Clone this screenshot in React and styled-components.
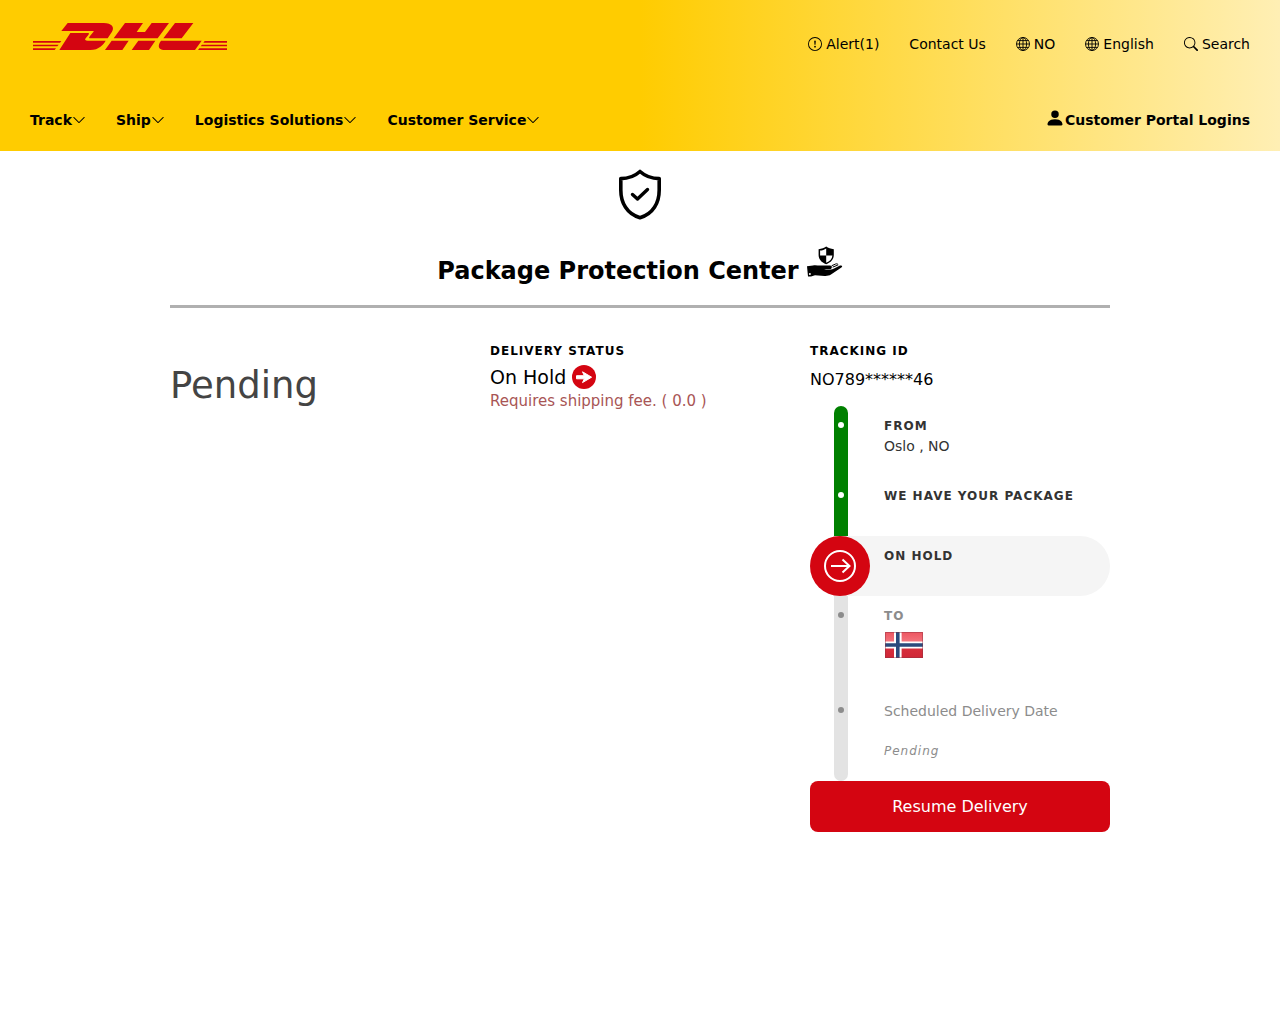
import React from "react";
import styled, { createGlobalStyle } from "styled-components";
import {
  BsChevronDown,
  BsExclamationCircle,
  BsPersonFill,
  BsSearch,
} from "react-icons/bs";

const GlobalStyle = createGlobalStyle`
  *, *::before, *::after { box-sizing: border-box; }
  body {
    margin: 0;
    background: #fff;
    color: #000;
    font-family: "DejaVu Sans", Verdana, sans-serif;
    font-size: 14px;
    line-height: 20px;
  }
  svg { display: block; flex: none; }
`;

const Header = styled.header`
  display: flex;
  flex-direction: column;
  gap: 51px;
  padding: 20px 30px 19px;
  background: linear-gradient(90deg, #ffcc00 50%, #ffefb4 100%);
`;

const Bar = styled.div`
  display: flex;
  align-items: center;
  justify-content: space-between;
`;

const TopBar = styled(Bar)`
  padding-bottom: 3px;
`;

const Links = styled.nav`
  display: flex;
  align-items: center;
  gap: 30px;
`;

const UtilityLinks = styled(Links)`
  padding-top: 14px;
`;

const LogoLink = styled.a`
  align-self: flex-start;
  padding: 3px;
`;

const NavLink = styled.a`
  display: inline-flex;
  align-items: center;
  gap: ${(p) => p.$gap || 0}px;
  color: #000;
  font-weight: ${(p) => (p.$bold ? 700 : 400)};
  text-decoration: none;
`;

const NavButton = styled.button`
  display: inline-flex;
  align-items: center;
  gap: ${(p) => p.$gap || 0}px;
  padding: 0;
  border: 0;
  background: none;
  color: #000;
  font: inherit;
  font-weight: ${(p) => (p.$bold ? 700 : 400)};
  cursor: pointer;
`;

const PersonIcon = styled(BsPersonFill)`
  margin-bottom: 4px;
`;

const Page = styled.main`
  max-width: 980px;
  margin: 0 auto;
  padding: 18px 20px 40px;
`;

const Hero = styled.section`
  display: flex;
  flex-direction: column;
  align-items: center;
  gap: 26px;
  padding-bottom: 14px;
  border-bottom: 3px solid #b0b0b0;
`;

const Title = styled.h1`
  display: flex;
  align-items: flex-start;
  gap: 8px;
  margin: 0;
  font-size: 24px;
  line-height: 40px;
`;

const TitleText = styled.span`
  padding-top: 5px;
`;

const Columns = styled.section`
  display: grid;
  grid-template-columns: repeat(3, 1fr);
  gap: 20px;
  padding-top: 33px;
`;

const State = styled.h2`
  margin: 0;
  padding-top: 20px;
  color: #444;
  font-size: 37px;
  font-weight: 400;
  line-height: 50px;
`;

const Label = styled.h3`
  margin: 0;
  font-size: 12px;
  line-height: 20px;
  letter-spacing: 1px;
  text-transform: uppercase;
`;

const Status = styled.p`
  display: flex;
  align-items: center;
  gap: 6px;
  margin: 0;
  padding-top: 4px;
  font-size: 19px;
  line-height: 24px;
`;

const Fee = styled.p`
  margin: 0;
  color: #a85555;
  font-size: 15px;
  line-height: 24px;
`;

const TrackingId = styled.p`
  margin: 0;
  padding: 6px 0 14px;
  font-size: 16px;
  line-height: 25px;
`;

const Steps = styled.ol`
  margin: 0;
  padding: 0;
  list-style: none;
`;

const Step = styled.li`
  display: grid;
  grid-template-columns: 60px 1fr;
  column-gap: 14px;
  min-height: ${(p) => p.$height}px;
  border-radius: 30px;
  background: ${(p) => (p.$current ? "#f5f5f5" : "none")};
  color: ${(p) => (p.$upcoming ? "#8c8c8c" : "#333")};
`;

const Rail = styled.span`
  display: flex;
  justify-content: center;
  width: 14px;
  margin-left: 24px;
  padding-top: 16px;
  border-radius: ${(p) => (p.$first ? "7px 7px 0 0" : p.$last ? "0 0 7px 7px" : "0")};
  background: ${(p) => (p.$done ? "#008000" : "#e3e3e3")};

  &::before {
    content: "";
    width: 6px;
    height: 6px;
    border-radius: 50%;
    background: ${(p) => (p.$done ? "#fff" : "#8c8c8c")};
  }
`;

const CurrentMark = styled.span`
  display: flex;
  align-items: center;
  justify-content: center;
  width: 60px;
  height: 60px;
  border-radius: 50%;
  background: #d40511;
  color: #fff;
`;

const StepBody = styled.div`
  padding-top: 10px;
`;

const StepText = styled.p`
  margin: 0;
`;

const FlagBox = styled.div`
  padding-top: 6px;
`;

const Expected = styled.em`
  display: block;
  padding-top: 20px;
  font-size: 12px;
  letter-spacing: 1px;
`;

const Resume = styled.button`
  display: block;
  width: 100%;
  padding: 15px;
  border: 0;
  border-radius: 8px;
  background: #d40511;
  color: #fff;
  font: inherit;
  font-size: 16px;
  line-height: 21px;
  cursor: pointer;
`;

const Logo = () => (
  <svg width="194" height="27" viewBox="0 0 582 81" fill="#d40511" role="img" aria-label="DHL">
    <path d="M104 0H212C237 0 246 13 236 28L224 46H174C166 46 168 43 171 39L181 27C184 23 181 24 176 24H85Z" />
    <path d="M112 30H163C169 30 169 32 166 36L158 46C154 51 157 53 164 53H218C212 64 198 81 172 81H79Z" />
    <path d="M276 0H330L311 27H336L356 0H408L374 46H242Z" />
    <path d="M236 53H287L268 81H216ZM316 53H367L348 81H296Z" />
    <path d="M426 0H481L446 46H391ZM384 53H506L486 81H397C378 81 371 71 384 53Z" />
    <path d="M0 54H85L81 59H0ZM0 65H77L73 70H0ZM0 76H69L65 81H0Z" />
    <path d="M515 54H582V59H511ZM507 65H582V70H503ZM499 76H582V81H495Z" />
  </svg>
);

const Globe = () => (
  <svg width="14" height="14" viewBox="0 0 14 14" fill="none" stroke="currentColor" strokeWidth=".9" aria-hidden="true">
    <circle cx="7" cy="7" r="6.5" />
    <ellipse cx="7" cy="7" rx="3.6" ry="6.5" />
    <path d="M7 .5v13M.5 7h13M1.5 3.6h11M1.5 10.4h11" />
  </svg>
);

const ShieldCheck = () => (
  <svg width="42" height="51" viewBox="0 0 42 51" fill="none" stroke="#000" strokeLinecap="round" strokeLinejoin="round" aria-hidden="true">
    <path strokeWidth="3.6" d="M21 2.5C16 7 9 9.6 1.8 9.6V21C1.8 34 8 45 21 48.8C34 45 40.2 34 40.2 21V9.6C33 9.6 26 7 21 2.5Z" />
    <path strokeWidth="3.4" d="M13.5 25.5L18.5 30L28.5 20.5" />
  </svg>
);

const HandShield = () => (
  <svg width="36" height="32" viewBox="0 0 36 32" aria-hidden="true">
    <path d="M19.2 .6C17.2 2.3 14.7 2.9 11.6 3.2V9C11.6 13.4 14.5 16.4 19.2 18.2C23.9 16.4 26.8 13.4 26.8 9V3.2C23.7 2.9 21.2 2.3 19.2 .6Z" />
    <path fill="#fff" d="M19.2 2.4C17.4 3.7 15.3 4.3 13.1 4.6V9.4H19.2ZM19.2 9.4H25.4C25 12.9 22.8 15.3 19.2 16.7Z" />
    <path d="M0 20.2L6 19.4C9 19 11 19.6 13.5 19.6H23C25.5 19.6 25.5 23 23 23.2H17C20 24.2 24 24 26.5 22.8L33 19.6C35 18.8 36 20.4 34.4 21.4L24 28.6C22 29.8 20 30 17.5 29.9L8 29.3L4 30.4H1Z" />
    <path fill="none" stroke="#000" strokeWidth="1" strokeLinecap="round" d="M26 21L30.5 19.2M25 19.6L28.6 18C29.6 17.6 30.4 17.8 31 18.4" />
    <circle cx="2.9" cy="27.9" r="1" fill="#fff" />
  </svg>
);

const HoldArrow = () => (
  <svg width="24" height="24" viewBox="0 0 24 24" aria-hidden="true">
    <circle cx="12" cy="12" r="12" fill="#d40511" />
    <path fill="#fff" stroke="#fff" strokeWidth="1" strokeLinejoin="round" d="M4.5 10.7H12.3L10.5 6.8L19.6 12.2L10.5 17.6L12.3 13.8H4.5Z" />
  </svg>
);

const CircledArrow = () => (
  <svg width="32" height="32" viewBox="0 0 32 32" fill="none" stroke="currentColor" strokeWidth="2" aria-hidden="true">
    <circle cx="16" cy="16" r="15" />
    <path d="M7 16H25.5M18.5 9.5L25.5 16L18.5 22.5" />
  </svg>
);

const NorwayFlag = () => (
  <svg width="40" height="26" viewBox="0 0 40 26" role="img" aria-label="Norway">
    <defs>
      <linearGradient id="flag-red" x1="0" y1="0" x2="0" y2="1">
        <stop offset="0" stopColor="#ed5560" />
        <stop offset=".45" stopColor="#f47a83" />
        <stop offset=".5" stopColor="#d9303d" />
        <stop offset="1" stopColor="#cf2737" />
      </linearGradient>
    </defs>
    <path fill="url(#flag-red)" d="M1 0H39V26H1Z" />
    <path fill="#fff" d="M10 0H17.6V9.5H39V16.5H17.6V26H10V16.5H1V9.5H10Z" />
    <path fill="#2b4a7c" d="M12 0H15.6V11.2H39V14.8H15.6V26H12V14.8H1V11.2H12Z" />
    <path fill="none" stroke="#8b3040" strokeOpacity=".45" d="M1.5 .5H38.5V25.5H1.5Z" />
  </svg>
);

const MENUS = ["Track", "Ship", "Logistics Solutions", "Customer Service"];

export default function App() {
  return (
    <>
      <GlobalStyle />
      <Header>
        <TopBar>
          <LogoLink href="#home">
            <Logo />
          </LogoLink>
          <UtilityLinks aria-label="Utility">
            <NavLink href="#alerts" $gap={4}><BsExclamationCircle size={14} />Alert(1)</NavLink>
            <NavLink href="#contact">Contact Us</NavLink>
            <NavButton type="button" $gap={4}><Globe />NO</NavButton>
            <NavButton type="button" $gap={4}><Globe />English</NavButton>
            <NavButton type="button" $gap={4}><BsSearch size={14} />Search</NavButton>
          </UtilityLinks>
        </TopBar>
        <Bar>
          <Links aria-label="Main">
            {MENUS.map((name) => (
              <NavButton type="button" $bold key={name}>
                {name}
                <BsChevronDown size={14} />
              </NavButton>
            ))}
          </Links>
          <NavLink href="#portal" $bold><PersonIcon size={20} />Customer Portal Logins</NavLink>
        </Bar>
      </Header>
      <Page>
        <Hero>
          <ShieldCheck />
          <Title>
            <TitleText>Package Protection Center</TitleText>
            <HandShield />
          </Title>
        </Hero>
        <Columns>
          <State>Pending</State>
          <div>
            <Label>Delivery Status</Label>
            <Status>On Hold <HoldArrow /></Status>
            <Fee>Requires shipping fee. ( 0.0 )</Fee>
          </div>
          <div>
            <Label>Tracking ID</Label>
            <TrackingId>NO789******46</TrackingId>
            <Steps>
              <Step $height={70}>
                <Rail $done $first />
                <StepBody>
                  <Label>From</Label>
                  <StepText>Oslo , NO</StepText>
                </StepBody>
              </Step>
              <Step $height={60}>
                <Rail $done />
                <StepBody><Label>We have your package</Label></StepBody>
              </Step>
              <Step $height={60} $current aria-current="step">
                <CurrentMark><CircledArrow /></CurrentMark>
                <StepBody><Label>On Hold</Label></StepBody>
              </Step>
              <Step $height={95} $upcoming>
                <Rail />
                <StepBody>
                  <Label>To</Label>
                  <FlagBox><NorwayFlag /></FlagBox>
                </StepBody>
              </Step>
              <Step $height={90} $upcoming>
                <Rail $last />
                <StepBody>
                  <StepText>Scheduled Delivery Date</StepText>
                  <Expected>Pending</Expected>
                </StepBody>
              </Step>
            </Steps>
            <Resume type="button">Resume Delivery</Resume>
          </div>
        </Columns>
      </Page>
    </>
  );
}
